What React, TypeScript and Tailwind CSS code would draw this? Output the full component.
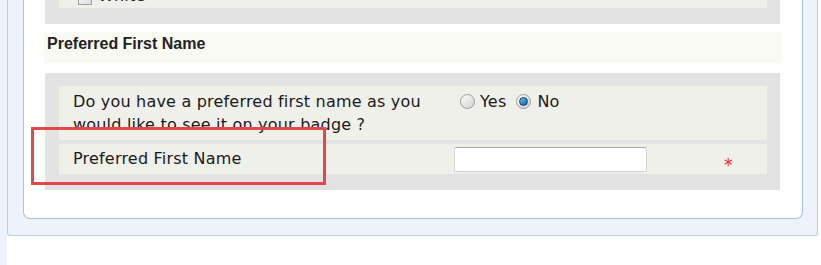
import React from "react";

const verdana = { fontFamily: '"DejaVu Sans", Verdana, sans-serif' };

function Radio({ checked }: { checked?: boolean }) {
  return (
    <span className="relative inline-flex h-[15px] w-[15px] items-center justify-center rounded-full border border-[#9a9a9a] bg-gradient-to-br from-[#fdfdfd] to-[#d2d2d2]">
      {checked && (
        <span className="h-[9px] w-[9px] rounded-full border border-[#0b3f6e] bg-gradient-to-br from-[#6cc0f5] to-[#0a5c9e]" />
      )}
    </span>
  );
}

export default function App() {
  return (
    <div className="relative flex h-[265px] w-[821px] overflow-hidden bg-white">
      <div className="h-full w-[7px] bg-[#eef2fb]" />

      <div className="h-[236px] w-[811px] rounded-b-[3px] border-x border-b border-[#b9cde7] bg-[#eef2fb] px-[15px]">
        <div className="h-[219px] w-[780px] rounded-b-[7px] border-x border-b border-[#a8c1e4] bg-white pl-[21px]">
          {/* previous question, cut off at top */}
          <div className="h-[24px] w-[735px] bg-[#e3e3e3] pl-[14px]">
            <div
              className="flex h-[8px] w-[708px] items-end overflow-hidden bg-[#f0f0eb] pl-[19px]"
              style={verdana}
            >
              <div className="mb-[2px] flex items-end gap-[6px] text-[16px] leading-[20px] tracking-[0.2px] text-[#222]">
                <span className="mb-[1px] h-[14px] w-[14px] border border-[#a0a0a0] bg-gradient-to-br from-white to-[#dcdcdc]" />
                <span>White</span>
              </div>
            </div>
          </div>

          <div
            className="mt-[8px] -ml-[1px] flex h-[31px] w-[738px] items-start bg-[#fafaf5] pl-[3px] pt-[3px] text-[16px] font-bold leading-[18px] text-[#222]"
            style={{ fontFamily: '"Liberation Sans", Arial, sans-serif' }}
          >
            Preferred First Name
          </div>

          <div
            className="mt-[10px] flex h-[117px] w-[735px] flex-col gap-[4px] bg-[#e3e3e3] pl-[14px] pt-[13px]"
            style={verdana}
          >
            <div className="flex h-[54px] w-[708px] bg-[#f0f0eb] pt-[4px] text-[16px] leading-[23px] tracking-[0.2px] text-[#1a1a1a]">
              <div className="w-[395px] whitespace-nowrap pl-[14px]">
                Do you have a preferred first name as you
                <br />
                would like to see it on your badge ?
              </div>
              <div className="flex h-[23px] items-center pl-[6px]">
                <Radio />
                <span className="ml-[5px]">Yes</span>
                <span className="ml-[10px] flex items-center">
                  <Radio checked />
                </span>
                <span className="ml-[6px]">No</span>
              </div>
            </div>

            <div className="flex h-[30px] w-[708px] items-center bg-[#f0f0eb] text-[16px] tracking-[0.2px] text-[#1a1a1a]">
              <div className="w-[395px] pl-[14px]">Preferred First Name</div>
              <input
                type="text"
                className="h-[25px] w-[193px] rounded-[2px] border border-[#d0d4de] border-t-[#a9a9a9] bg-white outline-none"
              />
              <span className="ml-[77px] mt-[12px] text-[17px] leading-none text-[#ff2020]">*</span>
            </div>
          </div>
        </div>
      </div>

      {/* annotation highlight */}
      <div className="absolute left-[31px] top-[127px] h-[58px] w-[295px] border-[3px] border-[#e2474a]" />
    </div>
  );
}
